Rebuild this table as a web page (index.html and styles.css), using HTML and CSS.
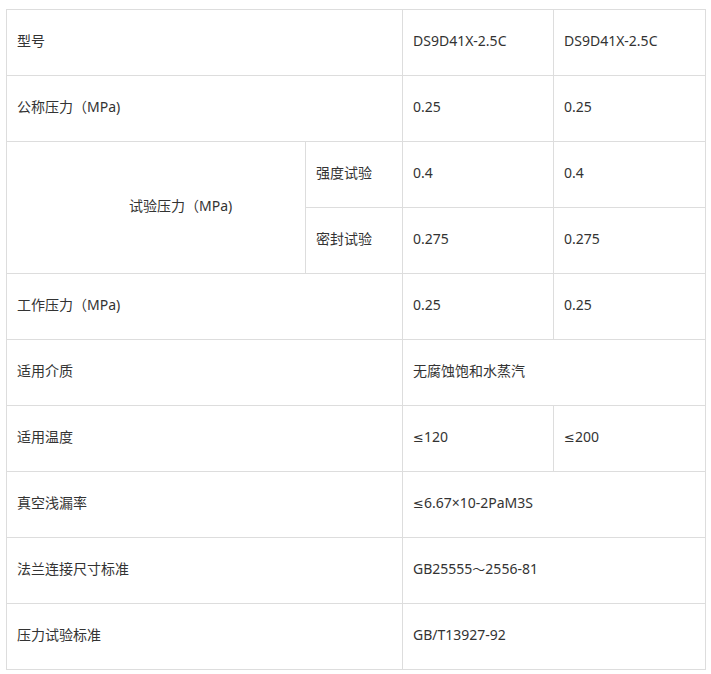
FILE: index.html
```html
<!DOCTYPE html>
<html lang="zh">
<head>
<meta charset="utf-8">
<title>参数表</title>
<link rel="stylesheet" href="styles.css">
</head>
<body>
<table class="spec">
  <colgroup>
    <col class="c1"><col class="c2"><col class="c3"><col class="c4">
  </colgroup>
  <tbody>
    <tr><td colspan="2">型号</td><td>DS9D41X-2.5C</td><td>DS9D41X-2.5C</td></tr>
    <tr><td colspan="2">公称压力（MPa)</td><td>0.25</td><td>0.25</td></tr>
    <tr><td rowspan="2" class="center">试验压力（MPa)</td><td>强度试验</td><td>0.4</td><td>0.4</td></tr>
    <tr><td>密封试验</td><td>0.275</td><td>0.275</td></tr>
    <tr><td colspan="2">工作压力（MPa)</td><td>0.25</td><td>0.25</td></tr>
    <tr><td colspan="2">适用介质</td><td colspan="2">无腐蚀饱和水蒸汽</td></tr>
    <tr><td colspan="2">适用温度</td><td><span class="sym">≤</span>120</td><td><span class="sym">≤</span>200</td></tr>
    <tr><td colspan="2">真空浅漏率</td><td colspan="2"><span class="sym">≤</span>6.67×10-2PaM3S</td></tr>
    <tr><td colspan="2">法兰连接尺寸标准</td><td colspan="2">GB25555<span class="sym">～</span>2556-81</td></tr>
    <tr><td colspan="2">压力试验标准</td><td colspan="2">GB/T13927-92</td></tr>
  </tbody>
</table>
</body>
</html>
```
FILE: styles.css
```css
html, body {
  margin: 0;
  background: #fff;
}
body {
  padding: 9px 6px;
  font-family: "Noto Sans", "Noto Sans CJK SC", sans-serif;
  font-size: 14px;
  line-height: 20px;
  color: #333;
}
.spec {
  border-collapse: collapse;
  table-layout: fixed;
  width: 700px;
}
.c1 { width: 299px; }
.c2 { width: 97px; }
.c3 { width: 151px; }
.c4 { width: 152px; }
.spec td {
  border: 1px solid #ddd;
  height: 66px;
  padding: 0 10px 3px;
  vertical-align: middle;
  text-align: left;
  white-space: nowrap;
  box-sizing: border-box;
}
.spec td.center {
  padding-left: 122px;
}
.sym {
  font-family: "DejaVu Sans", "Noto Sans CJK SC", sans-serif;
  font-size: 13px;
  line-height: 20px;
}
```
